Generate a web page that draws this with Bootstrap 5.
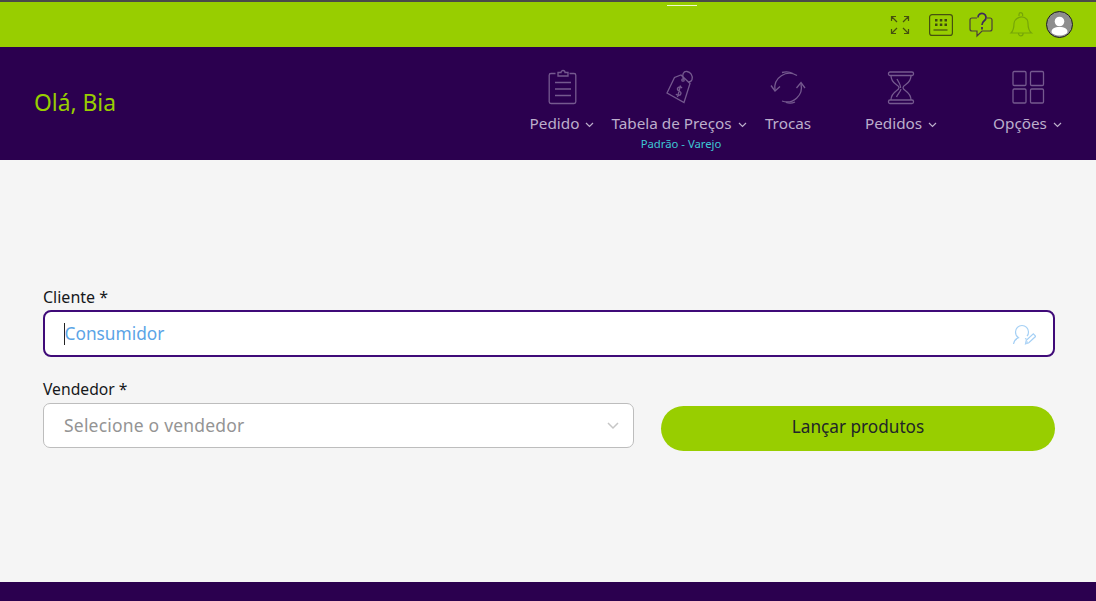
<!DOCTYPE html>
<html lang="pt-BR"><head><meta charset="utf-8">
<link href="https://cdn.jsdelivr.net/npm/bootstrap@5.3.0/dist/css/bootstrap.min.css" rel="stylesheet">
<style>
html,body{height:601px;overflow:hidden}
body{background:#f5f5f5;font-family:"Noto Sans","Open Sans",sans-serif;color:#212529}
.app-shell{height:601px}
.top-strip{height:47px;background:#98ce00;border-top:2px solid #4a4a4a;padding-right:23px}
.top-mark{left:667px;top:3px;width:30px;height:1px;background:#f0f8d0}
.ticon{width:40px;height:26px;display:block;fill:none;stroke:#45510f;stroke-width:1.2}
.ticon .dk{fill:#3d4a10;stroke:none}
.ticon .qm{stroke:#3e2a5a;stroke-width:1.7}
.ticon .bub{stroke:#4a3f3a}
.ticon.bell{stroke:#76a508}
.avatar{width:27px;height:27px;margin-left:6px;display:block}
.head-bar{height:113px;background:#2b004f;padding-left:34px;padding-right:34px}
.hello{color:#98ce00;font-size:22.8px;margin-top:0}
.menu-item{color:#bcaecb;font-size:15.3px;line-height:20px;padding-top:22px}
.mi-a{width:64px}
.mi-b{width:136px;margin-left:17px}
.mi-c{width:46px;margin-left:18px}
.mi-d{width:72px;margin-left:54px}
.mi-e{width:69px;margin-left:56px}
.micon{width:40px;height:36px;flex:none;display:block;fill:none;stroke:#75598f;stroke-width:1.3;margin-bottom:8px}
.caret-mark{width:9px;height:6px;fill:none;stroke:#bcaecb;stroke-width:1.2;margin-left:6px;vertical-align:1px}
.price-note{font-size:11.3px;color:#3ec6d4;line-height:14px;top:90px;left:2px;width:100%}
.main-form{padding:127px 41px 0 43px}
.fld-label{line-height:20px;color:#16181b}
.fld-client{font-size:16px;margin-bottom:3px}
.fld-seller{font-size:15.7px;margin-bottom:4px}
.client-box{height:47px;border:2.5px solid #3f0a78;border-radius:8px;background:#fff;padding:0 17.500px 0 18.500px;margin-bottom:22px;font-size:17.3px;color:#5ba4e6}
.caret-line{width:1px;height:22px;background:#222;flex:none}
.cicon{width:24px;height:22px;fill:none;stroke:#a5d0f5;stroke-width:1.2;flex:none}
.seller-box{width:591px;height:45px;border:1px solid #bdbdbd;border-radius:7px;background:#fff;padding:0 14px 0 20px;font-size:17.5px;color:#949494;letter-spacing:.2px}
.chev{width:12px;height:8px;fill:none;stroke:#c6c6c6;stroke-width:1.5}
.launch{height:45px;width:394px;margin-left:27px;margin-top:3px;background:#98ce00;border-radius:23px;font-size:17.2px;line-height:42px;color:#212529;border:0;padding:0 0 3px}
.launch:hover{background:#98ce00}
.foot-bar{height:19px;background:#2b004f;margin-top:auto}
</style></head><body>
<div class="app-shell d-flex flex-column position-relative">
<div class="top-strip d-flex align-items-center justify-content-end position-relative">
<span class="top-mark position-absolute"></span>
<svg class="ticon" viewBox="0 0 40 26"><path d="M11.500 9V4.500H16M11.500 4.500l5.500 5.500M24 4.500h4.500V9M28.500 4.500L23 10M11.500 17v4.500H16M11.500 21.500L17 16M28.500 17v4.500H24M28.500 21.500L23 16"/></svg>
<svg class="ticon" viewBox="0 0 40 26"><rect x="9.600" y="2.600" width="22.800" height="20.800" rx="2.500"/><path d="M13.500 18h14"/><path class="dk" d="M15 7h2.500v2.500H15zM19.800 7h2.500v2.500h-2.500zM24.500 7H27v2.500h-2.500zM15 11.500h2.500V14H15zM19.800 11.500h2.500V14h-2.500zM24.500 11.500H27V14h-2.500z"/></svg>
<svg class="ticon" viewBox="0 0 40 26"><path class="bub" d="M17 6h-5a2 2 0 0 0-2 2v9a2 2 0 0 0 2 2h5v5l5-5h8a2 2 0 0 0 2-2V8a2 2 0 0 0-2-2h-3"/><path class="qm" d="M18 5.500a4 4 0 1 1 6.500 3c-1.500 1.200-2.500 2-2.500 4.500M22 15v2.500"/></svg>
<svg class="ticon bell" viewBox="0 0 40 26"><path d="M11 21c2-2 3-4.500 3-9.500a7.500 7.500 0 0 1 13 -4c1 1.500 1 2.500 1 4 0 5 1 7.500 3.500 9.500zM19 4V2.500a1.800 1.800 0 0 1 3.600 0V4M18.500 21.500a2.300 2.300 0 0 0 4.600 0"/></svg>
<svg class="avatar" viewBox="0 0 27 27"><circle cx="13.500" cy="13.500" r="13" fill="#8e8e8e" stroke="#1d1d1d" stroke-width="1"/><circle cx="13.500" cy="10.500" r="4.800" fill="#fff"/><path fill="#fff" d="M5.500 21c0-3.500 3-5 8-5s8 1.500 8 5c0 1.500-3.500 3.500-8 3.500s-8-2-8-3.500z"/></svg>
</div>
<div class="head-bar d-flex justify-content-between">
<div class="hello align-self-center">Olá, Bia</div>
<nav class="d-flex align-self-stretch">
<div class="menu-item mi-a d-flex flex-column align-items-center">
<svg class="micon" viewBox="0 0 40 36"><path d="M13.500 4.500H9a1.800 1.800 0 0 0-1.800 1.800v26.400A1.800 1.800 0 0 0 9 34.500h23a1.800 1.800 0 0 0 1.800-1.800V6.300A1.800 1.800 0 0 0 32 4.500h-4.500"/><path d="M16 7V3.500h3a2 2 0 0 1 4 0h3V7zM13 13.500h16M13 20h16M13 26.500h16"/></svg>
<span class="text-nowrap">Pedido<svg class="caret-mark" viewBox="0 0 9 6"><path d="M1 1l3.500 3.500L8 1"/></svg></span></div>
<div class="menu-item mi-b d-flex flex-column align-items-center position-relative">
<svg class="micon" viewBox="0 0 40 36"><path d="M8 24l7.500-15.500L22 6l9 8.500-6 19z"/><circle cx="24" cy="11" r="1.200"/><path d="M24.500 10c-2-4 0-8 3.500-7.500s6 4 5 8c-.5 1.500-2 2.500-3.500 2.500"/><path d="M23 19c-1.500-2-5-1-4.500 1.500s4 1.500 3.500 4-4 2.500-5 .5M21.500 16.500l-3 11.500"/></svg>
<span class="text-nowrap">Tabela de Preços<svg class="caret-mark" viewBox="0 0 9 6"><path d="M1 1l3.500 3.500L8 1"/></svg></span>
<span class="price-note position-absolute text-center text-nowrap">Padrão - Varejo</span></div>
<div class="menu-item mi-c d-flex flex-column align-items-center">
<svg class="micon" viewBox="0 0 40 36"><path d="M7 21A14.500 14.500 0 0 1 29 6.500"/><path d="M3 16.500l4 5.500 5-4.500"/><path d="M33 15A14.500 14.500 0 0 1 14 32"/><path d="M28.500 19l4.500-5.500 4 5.500"/><path d="M14 3.500c4-1 8-.5 11 1M27 33c-3 1.500-6 1.500-9 .5"/></svg>
<span class="text-nowrap">Trocas</span></div>
<div class="menu-item mi-d d-flex flex-column align-items-center">
<svg class="micon" viewBox="0 0 40 36"><rect x="7.500" y="3" width="25" height="3.500" rx="1.500"/><rect x="7.500" y="31" width="25" height="3.500" rx="1.500"/><path d="M10 6.500c0 9 8 9 8 12.200s-8 3.500-8 12.300M30 6.500c0 9-8 9-8 12.200s8 3.500 8 12.300M16 10c1.500 3 4 6 3.500 9M15.500 28c1-3 4-5 4.500-8"/></svg>
<span class="text-nowrap">Pedidos<svg class="caret-mark" viewBox="0 0 9 6"><path d="M1 1l3.500 3.500L8 1"/></svg></span></div>
<div class="menu-item mi-e d-flex flex-column align-items-center">
<svg class="micon" viewBox="0 0 40 36"><rect x="5" y="2.500" width="13" height="14" rx="1.200"/><rect x="22.500" y="2.500" width="13" height="14" rx="1.200"/><rect x="5" y="20" width="13" height="14" rx="1.200"/><rect x="22.500" y="20" width="13" height="14" rx="1.200"/></svg>
<span class="text-nowrap">Opções<svg class="caret-mark" viewBox="0 0 9 6"><path d="M1 1l3.500 3.500L8 1"/></svg></span></div>
</nav>
</div>
<main class="main-form">
<div class="fld-label fld-client">Cliente *</div>
<div class="client-box d-flex align-items-center">
<span class="caret-line"></span><span class="flex-grow-1">Consumidor</span>
<svg class="cicon" viewBox="0 0 24 22"><path d="M1.500 21c.5-3 2-5 5-6.200-1.800-1.300-3-3.300-3-5.800a6.500 6.500 0 0 1 13 0c0 1.800-.5 3.200-1.500 4.200M13 15.500l1.500.6"/><path d="M13.500 20.800l.8-3.500 7-6.500 2.500 2.500-7 6.500z"/><path fill="#bcdcf8" stroke="none" d="M13.500 20.800l.8-3.500 2.800 2.700z"/></svg>
</div>
<div class="fld-label fld-seller">Vendedor *</div>
<div class="d-flex align-items-start">
<div class="seller-box d-flex align-items-center justify-content-between"><span>Selecione o vendedor</span><svg class="chev" viewBox="0 0 12 8"><path d="M1 1l5 5 5-5"/></svg></div>
<button type="button" class="btn launch">Lançar produtos</button>
</div>
</main>
<div class="foot-bar"></div>
</div>
<script src="https://cdn.jsdelivr.net/npm/bootstrap@5.3.0/dist/js/bootstrap.bundle.min.js"></script>
</body></html>
